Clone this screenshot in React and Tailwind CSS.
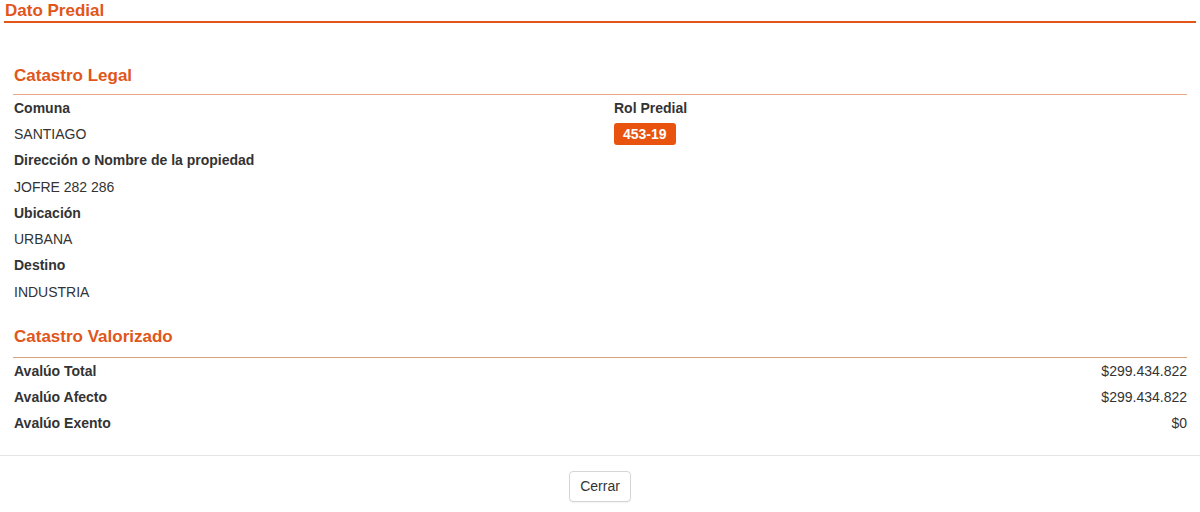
export default function App() {
    const legal = [
        { label: 'Comuna', value: 'SANTIAGO' },
        { label: 'Dirección o Nombre de la propiedad', value: 'JOFRE 282 286' },
        { label: 'Ubicación', value: 'URBANA' },
        { label: 'Destino', value: 'INDUSTRIA' },
    ];

    const avaluos = [
        { label: 'Avalúo Total', value: '$299.434.822' },
        { label: 'Avalúo Afecto', value: '$299.434.822' },
        { label: 'Avalúo Exento', value: '$0' },
    ];

    return (
        <div className="w-[1200px] h-[512px] bg-white text-[#333] font-['Liberation_Sans',Arial,sans-serif] text-[14px]">
            {/* Header */}
            <div className="mx-[4px] h-[23px] border-b-2 border-[#e0561b]">
                <h2 className="pl-[1px] text-[17px] leading-[22px] font-bold text-[#e0561b]">Dato Predial</h2>
            </div>

            <div className="px-[13px] pt-[43px]">
                {/* Catastro Legal */}
                <h3 className="pl-[1px] text-[17px] leading-[20px] font-bold text-[#e0561b] pb-[8px] border-b border-[#e9a987]">
                    Catastro Legal
                </h3>
                <div className="flex">
                    <div className="w-[588px] pl-[1px]">
                        {legal.map(item => (
                            <div key={item.label}>
                                <div className="h-[26.3px] flex items-center font-bold">{item.label}</div>
                                <div className="h-[26.3px] flex items-center">{item.value}</div>
                            </div>
                        ))}
                    </div>
                    <div className="pl-[13px]">
                        <div className="h-[26.3px] flex items-center font-bold">Rol Predial</div>
                        <div className="h-[26.3px] flex items-center">
                            <span className="h-[22px] px-[9px] flex items-center rounded-[3px] bg-[#e8540f] text-white font-bold">
                                453-19
                            </span>
                        </div>
                    </div>
                </div>

                {/* Catastro Valorizado */}
                <h3 className="mt-[21.6px] pl-[1px] text-[17px] leading-[20px] font-bold text-[#e0561b] pb-[10px] border-b border-[#d9a278]">
                    Catastro Valorizado
                </h3>
                <div>
                    {avaluos.map(item => (
                        <div key={item.label} className="h-[26.3px] flex items-center justify-between pl-[1px]">
                            <span className="font-bold">{item.label}</span>
                            <span>{item.value}</span>
                        </div>
                    ))}
                </div>
            </div>

            {/* Footer */}
            <div className="mt-[18px] border-t border-[#e5e5e5] pt-[15px] flex justify-center">
                <button className="h-[31px] px-[10px] border border-[#d6d6d6] rounded-[4px] bg-white text-[#333] text-[14px] shadow-[0_1px_1px_rgba(0,0,0,0.05)]">
                    Cerrar
                </button>
            </div>
        </div>
    );
}
